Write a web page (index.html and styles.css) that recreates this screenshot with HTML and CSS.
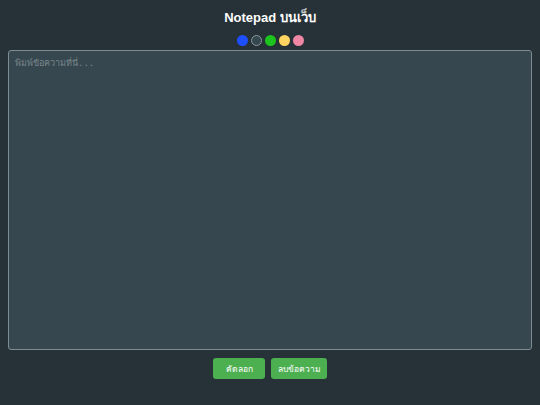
FILE: index.html
```html
<!DOCTYPE html>
<html lang="th">
<head>
<meta charset="utf-8">
<title>Notepad บนเว็บ</title>
<link rel="stylesheet" href="styles.css">
</head>
<body>
<h1 class="title">Notepad บนเว็บ</h1>
<div class="themes">
  <span class="dot dot-blue"></span>
  <span class="dot dot-dark"></span>
  <span class="dot dot-green"></span>
  <span class="dot dot-yellow"></span>
  <span class="dot dot-pink"></span>
</div>
<textarea class="note" placeholder="พิมพ์ข้อความที่นี่..."></textarea>
<div class="actions">
  <button class="btn btn-copy">คัดลอก</button>
  <button class="btn btn-clear">ลบข้อความ</button>
</div>
</body>
</html>
```

FILE: styles.css
```css
html, body {
  margin: 0;
  padding: 0;
}
body {
  background: #263238;
  color: #ffffff;
  font-family: "Liberation Sans", Arial, sans-serif;
  padding: 8px;
  height: 405px;
  box-sizing: border-box;
}
.title {
  margin: 0;
  padding-top: 1px;
  text-align: center;
  font-family: "Liberation Sans", Arial, sans-serif;
  font-size: 13px;
  font-weight: bold;
  line-height: 18px;
}
.themes {
  display: flex;
  justify-content: center;
  gap: 3px;
  margin-top: 8px;
}
.dot {
  width: 11px;
  height: 11px;
  border-radius: 50%;
  box-sizing: border-box;
}
.dot-blue { background: #1e4fff; }
.dot-dark { background: #37474f; border: 1px solid #8a969c; }
.dot-green { background: #1ec41e; }
.dot-yellow { background: #ffd460; }
.dot-pink { background: #ee86a4; }
.note {
  display: block;
  width: 100%;
  height: 300px;
  box-sizing: border-box;
  margin-top: 4px;
  background: #37474f;
  border: 1px solid #7f8c92;
  border-radius: 3px;
  color: #e0e0e0;
  font-family: "DejaVu Sans Mono", "Liberation Mono", monospace;
  font-size: 9px;
  padding: 5px 6px;
  resize: none;
  outline: none;
}
.note::placeholder {
  color: #77858b;
}
.actions {
  display: flex;
  justify-content: center;
  gap: 6px;
  margin-top: 8px;
}
.btn {
  background: #4caf50;
  color: #ffffff;
  border: none;
  border-radius: 3px;
  height: 21px;
  font-family: "Liberation Sans", "Noto Sans", sans-serif;
  font-size: 8.5px;
  cursor: pointer;
}
.btn-copy {
  padding: 0 12.5px;
}
.btn-clear {
  padding: 0 6.5px;
}
```
